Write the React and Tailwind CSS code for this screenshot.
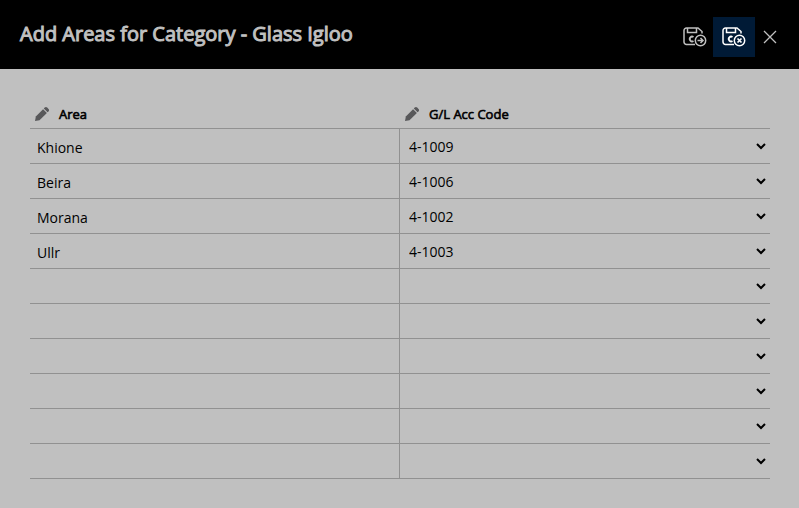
import { useState } from "react";

const initialRows = [
  { area: "Khione", code: "4-1009" },
  { area: "Beira", code: "4-1006" },
  { area: "Morana", code: "4-1002" },
  { area: "Ullr", code: "4-1003" },
  { area: "", code: "" },
  { area: "", code: "" },
  { area: "", code: "" },
  { area: "", code: "" },
  { area: "", code: "" },
  { area: "", code: "" },
];

const codes = ["", "4-1002", "4-1003", "4-1006", "4-1009"];

function SaveIcon({ children }) {
  return (
    <svg width="24" height="20" viewBox="0 0 24 20" fill="none" stroke="currentColor" strokeWidth="1.5">
      <path d="M12 17.5H3.5A2.5 2.5 0 0 1 1 15V3.5A2.5 2.5 0 0 1 3.5 1h11.5l4 3.5V6.500" />
      <path d="M4.5 1v4.500h9V1" />
      <path d="M10.500 10a2.400 2.400 0 1 0 0 4" strokeWidth="1.8" />
      <circle cx="17.5" cy="13.5" r="5.2" />
      {children}
    </svg>
  );
}

function PencilIcon() {
  return (
    <svg width="14" height="14" viewBox="0 0 14 14" fill="#58585a">
      <path d="M0 14l.8-4.400L8.100 2.200l3.800 3.800L4.500 13.300z" />
      <path d="M8.800 1.500l.9-.9c.8-.8 1.700-.8 2.500 0l1.300 1.300c.8.8.8 1.700 0 2.500l-.9.900z" />
    </svg>
  );
}

function HeaderCell({ children }) {
  return (
    <th scope="col" className="h-7 p-0 pl-[5px] text-left align-middle font-normal">
      <span className="flex items-center gap-[10px]">
        <PencilIcon />
        <span className="text-[13px] leading-4 [-webkit-text-stroke:0.6px_black]">{children}</span>
      </span>
    </th>
  );
}

export default function App() {
  const [rows, setRows] = useState(initialRows);

  const update = (index, field, value) => {
    setRows(rows.map((row, i) => (i === index ? { ...row, [field]: value } : row)));
  };

  return (
    <div className="min-h-screen bg-[#c0c0c0] font-['Open_Sans',sans-serif] text-black">
      <header className="flex h-[69px] items-center justify-between bg-black pl-5 pr-[15px] text-[#c0c0c0]">
        <h1 className="pb-[2px] text-xl leading-7 [-webkit-text-stroke:1px_#c0c0c0]">
          Add Areas for Category - Glass Igloo
        </h1>
        <div className="flex items-center pt-1">
          <button type="button" aria-label="Save and continue" className="flex h-10 w-9 items-center justify-center">
            <SaveIcon>
              <path d="M14.5 13.5h5.500M17.5 11l2.500 2.500-2.500 2.500" />
            </SaveIcon>
          </button>
          <button
            type="button"
            aria-label="Save and close"
            className="flex h-10 w-[42px] items-center justify-center bg-[#001a36] text-white"
          >
            <SaveIcon>
              <path d="M15.5 11.5l4 4M19.5 11.5l-4 4" strokeWidth="1.7" />
            </SaveIcon>
          </button>
          <button type="button" aria-label="Close" className="flex h-10 w-[29px] items-center justify-center">
            <svg width="14" height="14" viewBox="0 0 14 14" fill="none" stroke="currentColor" strokeWidth="1.3">
              <path d="M1 1l12 12M13 1L1 13" />
            </svg>
          </button>
        </div>
      </header>

      <main className="py-[31px] pl-[30px] pr-[29px]">
        <table className="w-full table-fixed border-separate border-spacing-0">
          <thead>
            <tr>
              <HeaderCell>Area</HeaderCell>
              <HeaderCell>G/L Acc Code</HeaderCell>
            </tr>
          </thead>
          <tbody>
            {rows.map((row, i) => (
              <tr key={i} className="h-[35px]">
                <td className="border-r border-t border-[#919191] p-0">
                  <input
                    type="text"
                    aria-label={`Area ${i + 1}`}
                    value={row.area}
                    onChange={(e) => update(i, "area", e.target.value)}
                    className="block h-[34px] w-full px-[7px] pt-[2px] text-sm outline-none"
                  />
                </td>
                <td className="border-t border-[#919191] p-0 pr-px">
                  <select
                    aria-label={`G/L Acc Code ${i + 1}`}
                    value={row.code}
                    onChange={(e) => update(i, "code", e.target.value)}
                    className="block h-[34px] w-full bg-transparent px-[5px] text-sm outline-none"
                  >
                    {codes.map((code) => (
                      <option key={code} value={code}>
                        {code}
                      </option>
                    ))}
                  </select>
                </td>
              </tr>
            ))}
          </tbody>
          <tfoot>
            <tr>
              <td colSpan={2} className="border-t border-[#919191] p-0" />
            </tr>
          </tfoot>
        </table>
      </main>
    </div>
  );
}
